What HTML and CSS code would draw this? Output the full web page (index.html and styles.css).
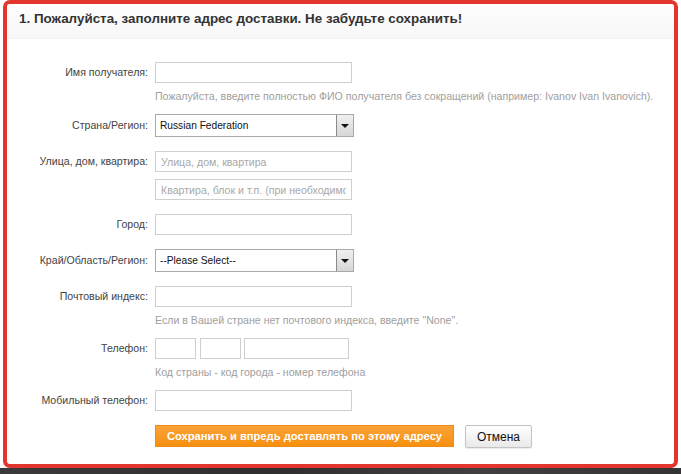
FILE: index.html
```html
<!DOCTYPE html>
<html lang="ru">
<head>
<meta charset="utf-8">
<title>Адрес доставки</title>
<link rel="stylesheet" href="styles.css">
</head>
<body>
<div class="frame">
  <div class="header">
    <h1 class="title">1. Пожалуйста, заполните адрес доставки. Не забудьте сохранить!</h1>
  </div>
  <form class="form">
    <div class="row">
      <label class="label">Имя получателя:</label>
      <div class="field">
        <input class="input w-full" type="text">
        <div class="hint">Пожалуйста, введите полностью ФИО получателя без сокращений (например: Ivanov Ivan Ivanovich).</div>
      </div>
    </div>
    <div class="row">
      <label class="label label-select">Страна/Регион:</label>
      <div class="field">
        <div class="select-wrap">
          <select class="select"><option>Russian Federation</option></select>
          <span class="select-btn"><span class="tri"></span></span>
        </div>
      </div>
    </div>
    <div class="row">
      <label class="label">Улица, дом, квартира:</label>
      <div class="field">
        <input class="input w-full" type="text" placeholder="Улица, дом, квартира">
        <input class="input w-full second" type="text" placeholder="Квартира, блок и т.п. (при необходимости)">
      </div>
    </div>
    <div class="row">
      <label class="label">Город:</label>
      <div class="field">
        <input class="input w-full" type="text">
      </div>
    </div>
    <div class="row">
      <label class="label label-select">Край/Область/Регион:</label>
      <div class="field">
        <div class="select-wrap select-wide">
          <select class="select"><option>--Please Select--</option></select>
          <span class="select-btn"><span class="tri"></span></span>
        </div>
      </div>
    </div>
    <div class="row">
      <label class="label">Почтовый индекс:</label>
      <div class="field">
        <input class="input w-full" type="text">
        <div class="hint">Если в Вашей стране нет почтового индекса, введите "None".</div>
      </div>
    </div>
    <div class="row">
      <label class="label">Телефон:</label>
      <div class="field">
        <div class="phones">
          <input class="input w-code" type="text">
          <input class="input w-code" type="text">
          <input class="input w-num" type="text">
        </div>
        <div class="hint">Код страны - код города - номер телефона</div>
      </div>
    </div>
    <div class="row">
      <label class="label">Мобильный телефон:</label>
      <div class="field">
        <input class="input w-full" type="text">
      </div>
    </div>
    <div class="actions">
      <button type="button" class="btn-save">Сохранить и впредь доставлять по этому адресу</button>
      <button type="button" class="btn-cancel">Отмена</button>
    </div>
  </form>
</div>
<div class="bottom-strip"></div>
</body>
</html>
```
FILE: styles.css
```css
* { box-sizing: border-box; }
html, body {
  margin: 0;
  padding: 0;
  background: #fff;
  font-family: "Liberation Sans", Arial, sans-serif;
  color: #333;
}
.frame {
  margin-left: 3px;
  width: 675px;
  height: 468px;
  border: 4px solid #e2352e;
  border-radius: 7px;
  background: #fff;
  overflow: hidden;
}
.header {
  height: 35px;
  padding: 7px 12px 0 12px;
  background: linear-gradient(#fdfdfd, #f8f8f8);
  border-bottom: 1px solid #f0f0f0;
}
.title {
  margin: 0;
  font-size: 13.4px;
  line-height: 16px;
  font-weight: bold;
  color: #333;
}
.form {
  padding-top: 23px;
}
.row {
  display: flex;
  align-items: flex-start;
  margin-bottom: 14px;
}
.label {
  flex: none;
  width: 141px;
  margin-right: 7px;
  text-align: right;
  font-size: 10.6px;
  line-height: 21px;
  color: #444;
}
.label-select { line-height: 23px; }
.field {
  display: flex;
  flex-direction: column;
  align-items: flex-start;
}
.input {
  height: 21px;
  border: 1px solid #cfcfcf;
  background: #fff;
  padding: 0 5px;
  font-family: "Liberation Sans", Arial, sans-serif;
  font-size: 10.6px;
  color: #333;
  outline: none;
}
.input::placeholder { color: #a8a8a8; }
.w-full { width: 197px; }
.second { margin-top: 7px; }
.phones {
  display: flex;
  gap: 4px;
}
.w-code { width: 41px; }
.w-num { width: 105px; margin-left: -1px; }
.hint {
  margin-top: 6px;
  margin-bottom: -3px;
  font-size: 10.6px;
  line-height: 14px;
  color: #a0a0a0;
  white-space: nowrap;
}
.select-wrap {
  display: flex;
  width: 199px;
  height: 23px;
  border: 1px solid #a9a9a9;
  background: #fff;
}
.select-wide { width: 199px; }
.select {
  flex: 1;
  min-width: 0;
  -webkit-appearance: none;
  appearance: none;
  border: none;
  background: transparent;
  padding: 0 4px;
  font-family: "Liberation Sans", Arial, sans-serif;
  font-size: 10.2px;
  color: #111;
  outline: none;
}
.select-btn {
  flex: none;
  width: 17px;
  height: 21px;
  border-left: 1px solid #8a8a8a;
  background: linear-gradient(#f0f0f0, #d6d6d6);
  display: flex;
  align-items: center;
  justify-content: center;
}
.tri {
  width: 0;
  height: 0;
  border-left: 4px solid transparent;
  border-right: 4px solid transparent;
  border-top: 4px solid #111;
  margin-top: 1px;
}
.actions {
  display: flex;
  align-items: flex-start;
  gap: 11px;
  margin-left: 148px;
  margin-top: 2px;
}
.btn-save {
  width: 299px;
  height: 22px;
  border: 1px solid #ef8a12;
  background: linear-gradient(#faa33a, #f6900f);
  color: #fff;
  font-family: "Liberation Sans", Arial, sans-serif;
  font-size: 11.2px;
  font-weight: bold;
  padding: 0;
  cursor: pointer;
}
.btn-cancel {
  width: 67px;
  height: 23px;
  border: 1px solid #c4c4c4;
  border-radius: 2px;
  background: linear-gradient(#ffffff, #e9e9e9);
  color: #111;
  font-family: "Liberation Sans", Arial, sans-serif;
  font-size: 12px;
  padding: 0;
  box-shadow: 0 1px 1px rgba(0,0,0,0.08);
  cursor: pointer;
}
.bottom-strip {
  height: 6px;
  background: linear-gradient(90deg, #3a3a3a, #2e2e2e 40%, #404040 70%, #333);
}
```
